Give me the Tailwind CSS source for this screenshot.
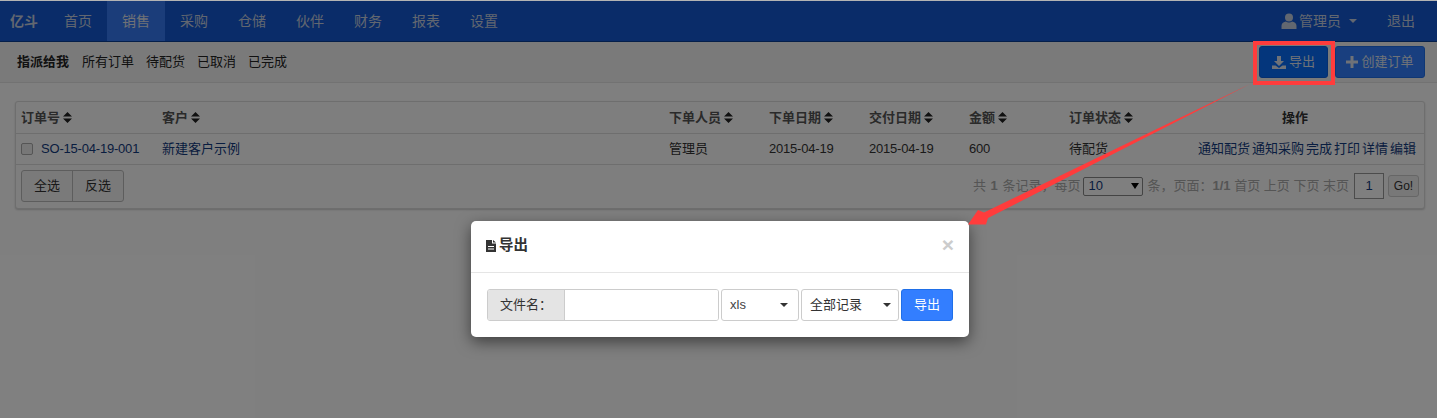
<!DOCTYPE html>
<html lang="zh-CN">
<head>
<meta charset="UTF-8">
<title>销售订单</title>
<script src="https://cdn.jsdelivr.net/npm/@tailwindcss/browser@4"></script>
</head>
<body class="relative h-[418px] w-[1437px] overflow-hidden bg-white font-['Liberation_Sans','Noto_Sans_CJK_SC',sans-serif] text-[13px] text-[#333]">

<!-- Top nav -->
<nav class="mt-px flex h-[41px] items-center border-b border-[#0b3f94] bg-[#1459d2] text-[14px] text-[#c4cee0]">
  <span class="w-[49px] pl-[10px] text-[14px] font-bold">亿斗</span>
  <a class="flex h-full w-[58px] items-center justify-center">首页</a>
  <a class="flex h-full w-[58px] items-center justify-center bg-[#367af4] text-[#e0e4ec]">销售</a>
  <a class="flex h-full w-[58px] items-center justify-center">采购</a>
  <a class="flex h-full w-[58px] items-center justify-center">仓储</a>
  <a class="flex h-full w-[58px] items-center justify-center">伙伴</a>
  <a class="flex h-full w-[58px] items-center justify-center">财务</a>
  <a class="flex h-full w-[58px] items-center justify-center">报表</a>
  <a class="flex h-full w-[58px] items-center justify-center">设置</a>
  <div class="ml-auto flex items-center">
    <svg class="mr-[2px] h-[16px] w-[16px] fill-current" viewBox="0 0 16 16"><circle cx="8" cy="4.6" r="4"/><path d="M0.5 16v-3.2c0-2.6 2.4-3.8 4.4-4.2 1.8 1.2 4.4 1.2 6.2 0 2 .4 4.4 1.6 4.4 4.2V16z"/></svg>
    <span>管理员</span>
    <span class="ml-[8px] h-0 w-0 border-x-4 border-t-4 border-x-transparent border-t-current"></span>
    <a class="ml-[30px] mr-[22px]">退出</a>
  </div>
</nav>

<!-- Sub bar -->
<div class="flex h-[41px] items-center justify-between border-b border-[#e4e4e4] bg-[#f5f5f5] pl-[17px] pr-[12px] text-[13px]">
  <div class="flex gap-[12px] pb-px">
    <a class="mr-px font-bold text-[#222]">指派给我</a>
    <a class="text-[#222]">所有订单</a>
    <a class="text-[#222]">待配货</a>
    <a class="text-[#222]">已取消</a>
    <a class="text-[#222]">已完成</a>
  </div>
  <div class="flex gap-[7px] text-[13px] text-[#dfe5f0]">
    <button class="flex h-[32px] w-[69px] items-center justify-center rounded-[3px] border border-[#0a5fe0] bg-[#086cf8]">
      <svg class="mr-[3px] h-[13px] w-[14px] fill-current" viewBox="0 0 14 13"><path d="M5 0h4v5h3L7 10 2 5h3z"/><path d="M0 9.5h3.5L7 12l3.5-2.500H14V13H0z"/></svg>导出
    </button>
    <button class="flex h-[32px] w-[90px] items-center justify-center rounded-[3px] border border-[#1f6fe8] bg-[#337eff]">
      <svg class="mr-[3px] h-[12px] w-[12px] fill-current" viewBox="0 0 12 12"><path d="M4.500 0h3v4.500H12v3H7.500V12h-3V7.500H0v-3h4.500z"/></svg>创建订单
    </button>
  </div>
</div>

<!-- Orders panel -->
<div class="ml-[15px] mr-[12px] mt-[18px] h-[108px] rounded-[3px] border border-[#ddd] bg-[#fdfdfd] shadow-[0_1px_2px_rgba(0,0,0,0.2)]">
  <table class="w-full table-fixed border-collapse">
    <colgroup>
      <col class="w-[140px]"><col class="w-[513px]"><col class="w-[100px]"><col class="w-[100px]"><col class="w-[100px]"><col class="w-[100px]"><col class="w-[100px]"><col>
    </colgroup>
    <thead>
      <tr class="h-[31px] border-b border-[#ddd] text-left font-bold text-[#555]">
        <th class="pl-[5px] font-bold"><span class="inline-flex items-center gap-[3px]">订单号<svg class="h-[11px] w-[9px] fill-[#222]" viewBox="0 0 9 11"><path d="M4.500 0 9 4.500H0zM0 6.500h9L4.500 11z"/></svg></span></th>
        <th class="pl-[6px] font-bold"><span class="inline-flex items-center gap-[3px]">客户<svg class="h-[11px] w-[9px] fill-[#222]" viewBox="0 0 9 11"><path d="M4.500 0 9 4.500H0zM0 6.500h9L4.500 11z"/></svg></span></th>
        <th class="font-bold"><span class="inline-flex items-center gap-[3px]">下单人员<svg class="h-[11px] w-[9px] fill-[#222]" viewBox="0 0 9 11"><path d="M4.500 0 9 4.500H0zM0 6.500h9L4.500 11z"/></svg></span></th>
        <th class="font-bold"><span class="inline-flex items-center gap-[3px]">下单日期<svg class="h-[11px] w-[9px] fill-[#222]" viewBox="0 0 9 11"><path d="M4.500 0 9 4.500H0zM0 6.500h9L4.500 11z"/></svg></span></th>
        <th class="font-bold"><span class="inline-flex items-center gap-[3px]">交付日期<svg class="h-[11px] w-[9px] fill-[#222]" viewBox="0 0 9 11"><path d="M4.500 0 9 4.500H0zM0 6.500h9L4.500 11z"/></svg></span></th>
        <th class="font-bold"><span class="inline-flex items-center gap-[3px]">金额<svg class="h-[11px] w-[9px] fill-[#222]" viewBox="0 0 9 11"><path d="M4.500 0 9 4.500H0zM0 6.500h9L4.500 11z"/></svg></span></th>
        <th class="font-bold"><span class="inline-flex items-center gap-[3px]">订单状态<svg class="h-[11px] w-[9px] fill-[#222]" viewBox="0 0 9 11"><path d="M4.500 0 9 4.500H0zM0 6.500h9L4.500 11z"/></svg></span></th>
        <th class="pr-[3px] text-center font-bold text-[#333]">操作</th>
      </tr>
    </thead>
    <tbody>
      <tr class="h-[31px] border-b border-[#ddd] text-[#333]">
        <td class="pl-[5px]"><span class="flex items-center gap-[8px]"><span class="h-[12px] w-[12px] rounded-[2px] border border-[#aaa] bg-[#eee]"></span><a class="tracking-[-0.2px] text-[#123a80]">SO-15-04-19-001</a></span></td>
        <td class="pl-[6px] text-[#123a80]">新建客户示例</td>
        <td>管理员</td>
        <td class="tracking-[-0.2px]">2015-04-19</td>
        <td class="tracking-[-0.2px]">2015-04-19</td>
        <td class="tracking-[-0.2px]">600</td>
        <td>待配货</td>
        <td class="pr-[8px] text-[#123a80]">
          <div class="flex justify-end gap-[2px]"><a>通知配货</a><a>通知采购</a><a>完成</a><a>打印</a><a>详情</a><a>编辑</a></div>
        </td>
      </tr>
    </tbody>
  </table>
  <div class="flex h-[43px] items-center justify-between px-[5px]">
    <div class="flex h-[32px] rounded-[3px] border border-[#bbb] bg-[#f5f5f5] text-[#333]">
      <button class="w-[51px] border-r border-[#bbb]">全选</button>
      <button class="w-[50px]">反选</button>
    </div>
    <div class="flex items-center text-[13px] text-[#aaa]">
      <span class="[word-spacing:1px]">共 <b>1</b> 条记录，每页</span>
      <span class="ml-[3px] mr-[4px] flex h-[19px] w-[60px] items-center justify-between rounded-[2px] border border-[#888] bg-white pl-[4px] pr-[3px] text-[#123a80]">10<span class="h-0 w-0 border-x-[4px] border-t-[6px] border-x-transparent border-t-black"></span></span>
      <span>条，页面：<b>1/1</b> 首页 上页 下页 末页</span>
      <span class="ml-[5px] flex h-[26px] w-[30px] items-center justify-center border border-[#999] bg-white text-[#123a80]">1</span>
      <button class="ml-[4px] h-[22px] w-[31px] rounded-[3px] border border-[#ccc] bg-[#f0f0f0] text-[12px] text-[#333]">Go!</button>
    </div>
  </div>
</div>

<!-- Backdrop -->
<div class="absolute inset-0 bg-black/50"></div>
<div class="absolute inset-x-0 top-0 h-px bg-[#b4b4b4]"></div>

<!-- Export modal -->
<div class="absolute left-[471px] top-[221px] h-[116px] w-[498px] rounded-[5px] bg-white shadow-[0_5px_15px_rgba(0,0,0,0.5)]">
  <div class="flex h-[52px] items-center justify-between border-b border-[#e5e5e5] px-[15px]">
    <div class="flex items-center gap-[3px] pb-[2px] text-[14.500px] font-bold text-[#333]">
      <svg class="h-[12px] w-[10px] fill-current" viewBox="0 0 10 12"><path d="M0 0h6v3.500h4V12H0zM2 6v1h6V6zm0 2.500v1h6v-1zM7 0l3 2.500H7z"/></svg>导出
    </div>
    <span class="mb-[5px] text-[21px] font-bold leading-none text-[#ccc]">×</span>
  </div>
  <div class="flex items-center pl-[16px] pt-[16px]">
    <div class="flex h-[32px] w-[232px] overflow-hidden rounded-[3px] border border-[#ccc]">
      <span class="flex w-[77px] items-center justify-center border-r border-[#ccc] bg-[#e4e4e4] text-[#333]">文件名：</span>
      <span class="flex-1 bg-white"></span>
    </div>
    <div class="ml-[2px] flex h-[32px] w-[78px] items-center justify-between rounded-[3px] border border-[#ccc] bg-white pl-[8px] pr-[10px] text-[#444]">xls<span class="h-0 w-0 border-x-4 border-t-4 border-x-transparent border-t-[#333]"></span></div>
    <div class="ml-[2px] flex h-[32px] w-[98px] items-center justify-between rounded-[3px] border border-[#ccc] bg-white pl-[8px] pr-[7px] text-[#333]">全部记录<span class="h-0 w-0 border-x-4 border-t-4 border-x-transparent border-t-[#333]"></span></div>
    <button class="ml-[2px] h-[32px] w-[52px] rounded-[3px] border border-[#1f6fe8] bg-[#337eff] text-white">导出</button>
  </div>
</div>

<!-- Annotation: red box + arrow -->
<svg class="pointer-events-none absolute left-0 top-0" width="1437" height="418" viewBox="0 0 1437 418">
  <rect x="1255" y="43" width="78" height="40" fill="none" stroke="#ff3c3c" stroke-width="4"/>
  <path d="M1250 84 L984 212.500 L978 210 L968 224.500 L986 224.500 L988 218 Z" fill="#ff3c3c"/>
</svg>
</body>
</html>
